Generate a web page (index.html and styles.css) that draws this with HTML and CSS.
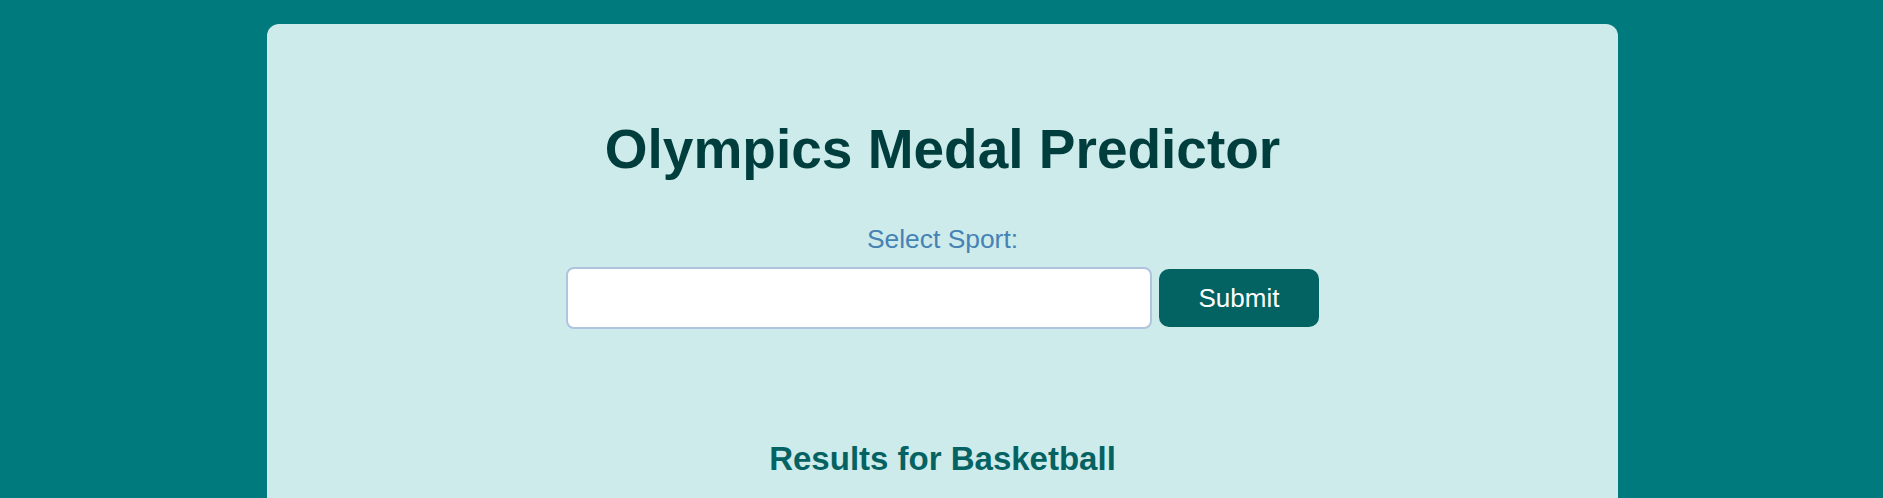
FILE: index.html
```html
<!DOCTYPE html>
<html lang="en">
<head>
<meta charset="utf-8">
<title>Olympics Medal Predictor</title>
<link rel="stylesheet" href="styles.css">
</head>
<body>
  <main class="card">
    <h1 class="title">Olympics Medal Predictor</h1>
    <form class="sport-form">
      <label class="sport-label" for="sport">Select Sport:</label>
      <div class="form-row">
        <input class="sport-input" id="sport" type="text">
        <button class="submit-btn" type="button">Submit</button>
      </div>
    </form>
    <section class="results">
      <h2 class="results-title">Results for Basketball</h2>
    </section>
  </main>
</body>
</html>
```

FILE: styles.css
```css
html, body {
  margin: 0;
  padding: 0;
}

body {
  background: #007a7c;
  font-family: "Liberation Sans", Arial, sans-serif;
  padding: 24px 0 0 2px;
  min-height: 100vh;
  box-sizing: border-box;
}

.card {
  width: 1351px;
  margin: 0 auto;
  background: #cdebeb;
  border-radius: 12px;
  padding: 94px 0 80px;
  box-sizing: border-box;
  text-align: center;
}

.title {
  margin: 0;
  font-size: 55px;
  font-weight: bold;
  line-height: 63px;
  color: #003e3e;
}

.sport-form {
  margin-top: 43px;
}

.sport-label {
  display: block;
  font-size: 26.4px;
  line-height: 30px;
  color: #4682b4;
  margin-bottom: 13px;
}

.form-row {
  display: flex;
  justify-content: center;
  align-items: center;
  gap: 7px;
}

.sport-input {
  width: 586px;
  height: 62px;
  box-sizing: border-box;
  border: 2px solid #b0c4de;
  border-radius: 8px;
  background: #ffffff;
  font-family: inherit;
  font-size: 22px;
  padding: 0 12px;
  outline: none;
}

.submit-btn {
  width: 160px;
  height: 58px;
  box-sizing: border-box;
  border: none;
  border-radius: 10px;
  background: #036262;
  color: #ffffff;
  font-family: inherit;
  font-size: 26px;
  cursor: pointer;
}

.results {
  margin-top: 111px;
}

.results-title {
  margin: 0;
  font-size: 33px;
  font-weight: bold;
  line-height: 38px;
  color: #056262;
}
```
